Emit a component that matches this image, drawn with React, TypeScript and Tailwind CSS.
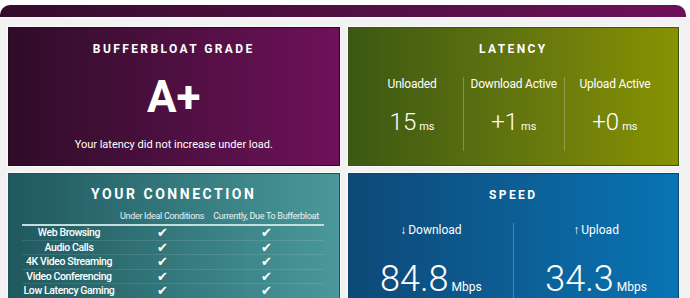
import React from 'react';

const rows = ['Web Browsing', 'Audio Calls', '4K Video Streaming', 'Video Conferencing', 'Low Latency Gaming'];

const latency = [
  { label: 'Unloaded', value: '15' },
  { label: 'Download Active', value: '+1' },
  { label: 'Upload Active', value: '+0' },
];

const speed = [
  { arrow: '↓', label: 'Download', value: '84.8' },
  { arrow: '↑', label: 'Upload', value: '34.3' },
];

const Title: React.FC<{ text: string; className?: string }> = ({ text, className }) => (
  <div className={`text-[12px] font-bold leading-[14px] tracking-[0.2em] ${className ?? ''}`}>{text}</div>
);

export default function App() {
  return (
    <div className="h-[298px] w-[690px] overflow-hidden bg-white font-['Roboto',sans-serif] text-white">
      <div className="mt-[5px] mr-[4px] h-[12px] rounded-t-[10px] bg-linear-to-r from-[#350c2c] to-[#6e105a]" />
      <div className="grid h-[281px] grid-cols-2 gap-x-[8px] gap-y-[7px] border-t border-[#fafafa] bg-[#f2f2f2] pt-[9px] pr-[11px] pl-[8px] content-start">
        {/* grade */}
        <div className="flex h-[139px] flex-col items-center border border-[#2a0a23] bg-linear-to-r from-[#2f0c28] to-[#6f105b] shadow-[0_0_0_1px_#fbfbfb]">
          <Title text="BUFFERBLOAT GRADE" className="mt-[14px]" />
          <div className="mt-[19px] text-[44px] font-bold leading-[44px]">A+</div>
          <div className="mt-[19px] text-[11px] leading-[14px]">Your latency did not increase under load.</div>
        </div>

        {/* latency */}
        <div className="flex h-[139px] flex-col items-center border border-[#3a5510] bg-linear-to-r from-[#3c5812] to-[#889200] shadow-[0_0_0_1px_#fbfbfb]">
          <Title text="LATENCY" className="mt-[14px]" />
          <div className="mt-[21px] grid w-full grid-cols-3 px-[13px]">
            {latency.map((l, i) => (
              <div
                key={l.label}
                className={`flex h-[74px] flex-col items-center ${i > 0 ? 'border-l border-white/25' : ''}`}
              >
                <div className="text-[12px] leading-[14px] tracking-[-0.2px]">{l.label}</div>
                <div className="mt-[19px] flex items-baseline">
                  <span className="text-[24px] leading-[24px] font-light">{l.value}</span>
                  <span className="ml-[3px] text-[11px]">ms</span>
                </div>
              </div>
            ))}
          </div>
        </div>

        {/* connection */}
        <div className="flex h-[130px] flex-col items-center border border-[#1c5358] bg-linear-to-r from-[#1f595f] to-[#4a999b] shadow-[0_0_0_1px_#fbfbfb]">
          <div className="mt-[12px] text-[14px] font-bold leading-[17px] tracking-[0.18em]">YOUR CONNECTION</div>
          <div className="mt-[8px] ml-[13px] w-[302px] self-start">
            <div className="flex h-[15px] border-b-2 border-[#c3dede] text-[9px] leading-[10px] text-white/90 whitespace-nowrap">
              <div className="w-[94px]" />
              <div className="w-[92px] text-center tracking-[-0.3px]">Under Ideal Conditions</div>
              <div className="flex-1 text-center tracking-[-0.3px]">Currently, Due To Bufferbloat</div>
            </div>
            {rows.map((r) => (
              <div key={r} className="flex h-[14.5px] items-center border-b border-white/10 text-[10.5px] leading-[13px] font-medium whitespace-nowrap">
                <div className="w-[94px] text-center tracking-[-0.4px]">{r}</div>
                <div className="w-[92px] text-center text-[12.5px] font-normal">✔</div>
                <div className="flex-1 text-center text-[12.5px] font-normal">✔</div>
              </div>
            ))}
          </div>
        </div>

        {/* speed */}
        <div className="flex h-[130px] flex-col items-center border border-[#0b4470] bg-linear-to-r from-[#0d4977] to-[#0874b4] shadow-[0_0_0_1px_#fbfbfb]">
          <Title text="SPEED" className="mt-[14px]" />
          <div className="mt-[21px] grid w-full flex-1 grid-cols-2">
            {speed.map((s, i) => (
              <div key={s.label} className={`flex flex-col items-center ${i > 0 ? 'border-l border-white/25' : ''}`}>
                <div className="text-[12px] leading-[14px]">
                  <span className="mr-[2px]">{s.arrow}</span>
                  {s.label}
                </div>
                <div className="mt-[28px] flex items-baseline">
                  <span className="text-[36px] leading-[28px] font-light">{s.value}</span>
                  <span className="ml-[3px] text-[12px] leading-[14px]">Mbps</span>
                </div>
              </div>
            ))}
          </div>
        </div>
      </div>
    </div>
  );
}
